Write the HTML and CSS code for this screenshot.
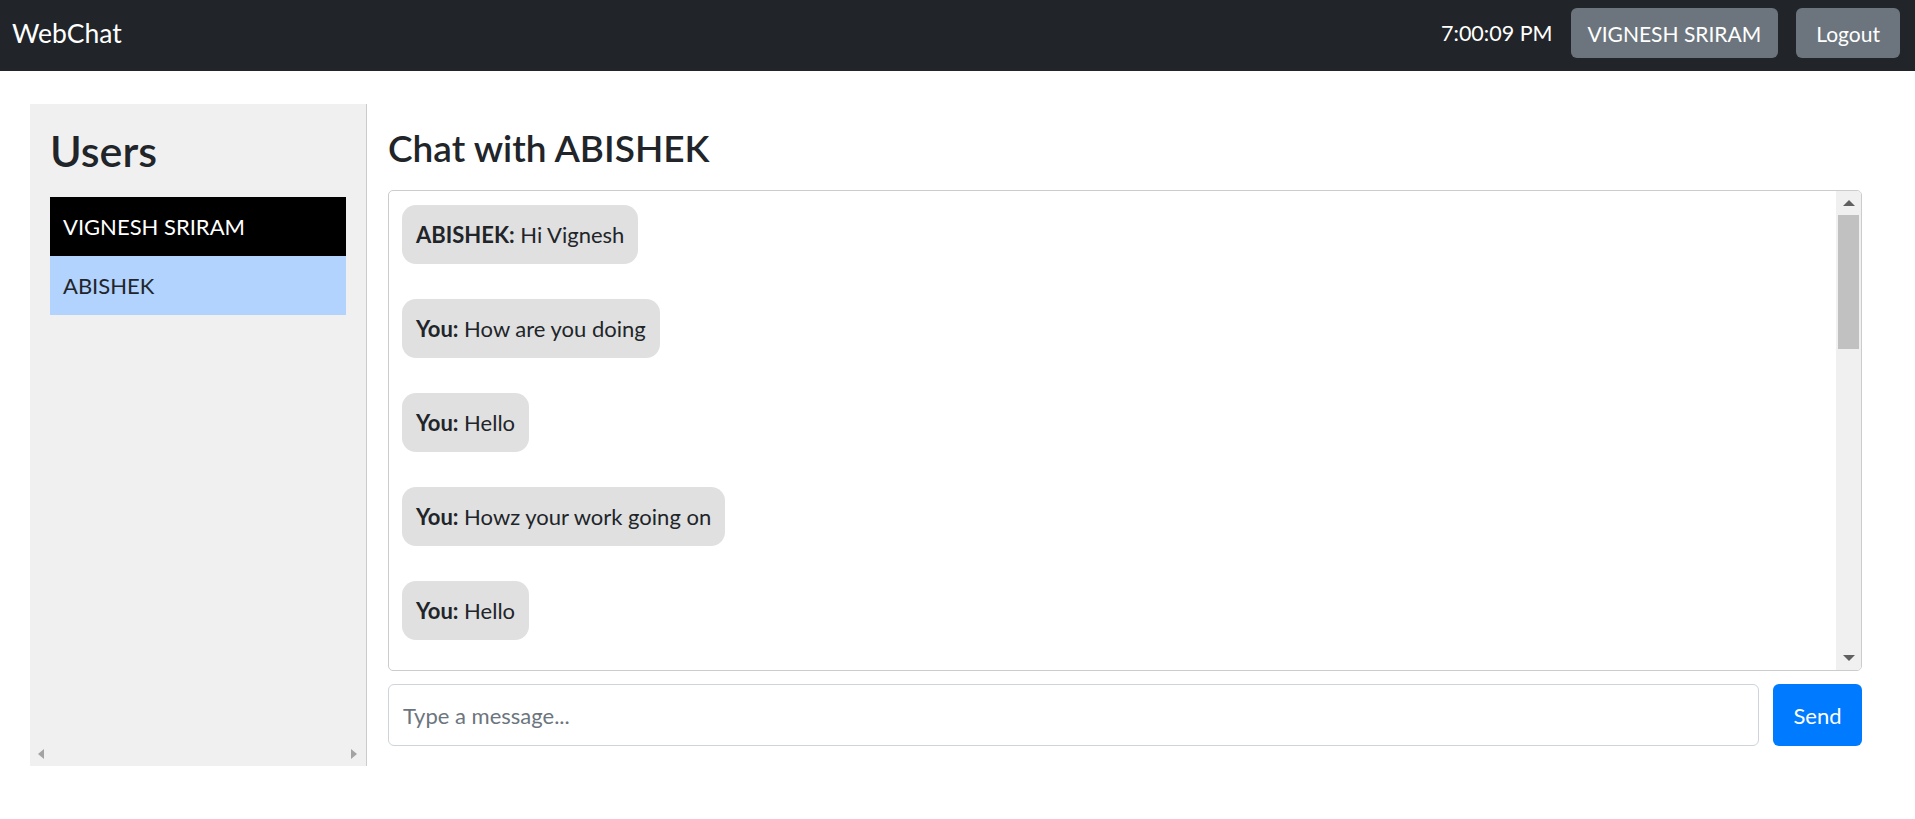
FILE: index.html
```html
<!DOCTYPE html>
<html lang="en">
<head>
<meta charset="utf-8">
<title>WebChat</title>
<link rel="stylesheet" href="styles.css">
</head>
<body>
<nav class="navbar">
  <span class="brand">WebChat</span>
  <div class="nav-right">
    <span class="clock">7:00:09 PM</span>
    <button class="btn btn-secondary">VIGNESH SRIRAM</button>
    <button class="btn btn-secondary btn-logout">Logout</button>
  </div>
</nav>
<div class="layout">
  <aside class="sidebar">
    <div class="sidebar-body">
      <h2 class="sidebar-title">Users</h2>
      <ul class="user-list">
        <li class="user-item user-self">VIGNESH SRIRAM</li>
        <li class="user-item user-active">ABISHEK</li>
      </ul>
    </div>
    <div class="hscroll">
      <span class="arrow arrow-left"></span>
      <span class="arrow arrow-right"></span>
    </div>
  </aside>
  <main class="chat">
    <h3 class="chat-title">Chat with ABISHEK</h3>
    <div class="messages">
      <div class="msg-list">
        <div class="bubble"><b>ABISHEK:</b> Hi Vignesh</div>
        <div class="bubble"><b>You:</b> How are you doing</div>
        <div class="bubble"><b>You:</b> Hello</div>
        <div class="bubble"><b>You:</b> Howz your work going on</div>
        <div class="bubble"><b>You:</b> Hello</div>
      </div>
      <div class="vscroll">
        <div class="vbtn"><span class="arrow arrow-up"></span></div>
        <div class="vtrack"><div class="vthumb"></div></div>
        <div class="vbtn"><span class="arrow arrow-down"></span></div>
      </div>
    </div>
    <div class="composer">
      <input class="msg-input" type="text" placeholder="Type a message...">
      <button class="btn btn-primary">Send</button>
    </div>
  </main>
</div>
</body>
</html>
```

FILE: styles.css
```css
* { box-sizing: border-box; }
html, body { margin: 0; padding: 0; }
body {
  font-family: Lato, "Noto Sans", sans-serif;
  font-size: 22px;
  color: #212529;
  background: #fff;
}

.navbar {
  height: 71px;
  background: #212529;
  display: flex;
  align-items: center;
  justify-content: space-between;
  padding: 0 15px 5px 12px;
}
.brand {
  color: #fff;
  font-size: 26.5px;
  line-height: 42px;
}
.nav-right {
  display: flex;
  align-items: center;
  gap: 18px;
}
.clock {
  color: #fff;
  font-size: 21.5px;
}

.btn {
  font-family: inherit;
  font-size: 22px;
  height: 50px;
  padding: 0 17px;
  border: none;
  border-radius: 6px;
  color: #fff;
  cursor: pointer;
}
.nav-right .btn { font-size: 21px; }
.nav-right .btn-logout { padding: 0 20px; }
.btn-secondary { background: #6c757d; }
.btn-primary {
  background: #007bff;
  width: 89px;
  height: 62px;
  padding: 0;
}

.layout {
  display: flex;
  align-items: flex-start;
  padding: 33px 53px 0 30px;
}

.sidebar {
  width: 337px;
  height: 662px;
  flex: none;
  background: #f0f0f0;
  border-right: 1px solid #cccccc;
  display: flex;
  flex-direction: column;
}
.sidebar-body {
  flex: 1;
  padding: 20px 20px 0 20px;
}
.sidebar-title {
  margin: 0 0 19px 0;
  font-size: 43px;
  font-weight: 600;
  line-height: 54px;
}
.user-list {
  list-style: none;
  margin: 0;
  padding: 0;
}
.user-item {
  padding: 13px 13px;
  line-height: 33px;
  font-size: 22px;
}
.user-self { background: #000; color: #fff; }
.user-active { background: #b1d3fe; color: #212529; }

.hscroll {
  height: 24px;
  display: flex;
  align-items: center;
  justify-content: space-between;
  padding: 0 9px 0 8px;
}

.arrow {
  width: 0;
  height: 0;
  display: block;
}
.arrow-left {
  border-top: 5px solid transparent;
  border-bottom: 5px solid transparent;
  border-right: 6px solid #a3a3a3;
}
.arrow-right {
  border-top: 5px solid transparent;
  border-bottom: 5px solid transparent;
  border-left: 6px solid #a3a3a3;
}
.arrow-up {
  border-left: 6px solid transparent;
  border-right: 6px solid transparent;
  border-bottom: 6px solid #606060;
}
.arrow-down {
  border-left: 6px solid transparent;
  border-right: 6px solid transparent;
  border-top: 6px solid #606060;
}

.chat {
  flex: 1;
  padding: 20px 0 0 21px;
  display: flex;
  flex-direction: column;
}
.chat-title {
  margin: 0 0 19px 0;
  font-size: 37px;
  font-weight: 600;
  line-height: 47px;
}

.messages {
  height: 481px;
  border: 1px solid #cccccc;
  border-radius: 5px;
  display: flex;
  overflow: hidden;
}
.msg-list {
  flex: 1;
  padding: 14px 13px;
  display: flex;
  flex-direction: column;
  align-items: flex-start;
  gap: 35px;
  overflow: hidden;
}
.bubble {
  background: #e0e0e0;
  border-radius: 14px;
  padding: 13px 14px;
  line-height: 33px;
  font-size: 22px;
  white-space: nowrap;
}
.bubble b { font-weight: 700; }

.vscroll {
  width: 25px;
  flex: none;
  background: #f0f0f0;
  display: flex;
  flex-direction: column;
}
.vbtn {
  height: 24px;
  display: flex;
  align-items: center;
  justify-content: center;
}
.vtrack {
  flex: 1;
  padding: 0 2px;
}
.vthumb {
  height: 134px;
  background: #c1c1c1;
}

.composer {
  margin-top: 13px;
  display: flex;
  gap: 14px;
}
.msg-input {
  flex: 1;
  height: 62px;
  border: 1px solid #ced4da;
  border-radius: 6px;
  padding: 0 14px;
  font-family: inherit;
  font-size: 22px;
  color: #495057;
  outline: none;
}
.msg-input::placeholder { color: #6c757d; }
```
